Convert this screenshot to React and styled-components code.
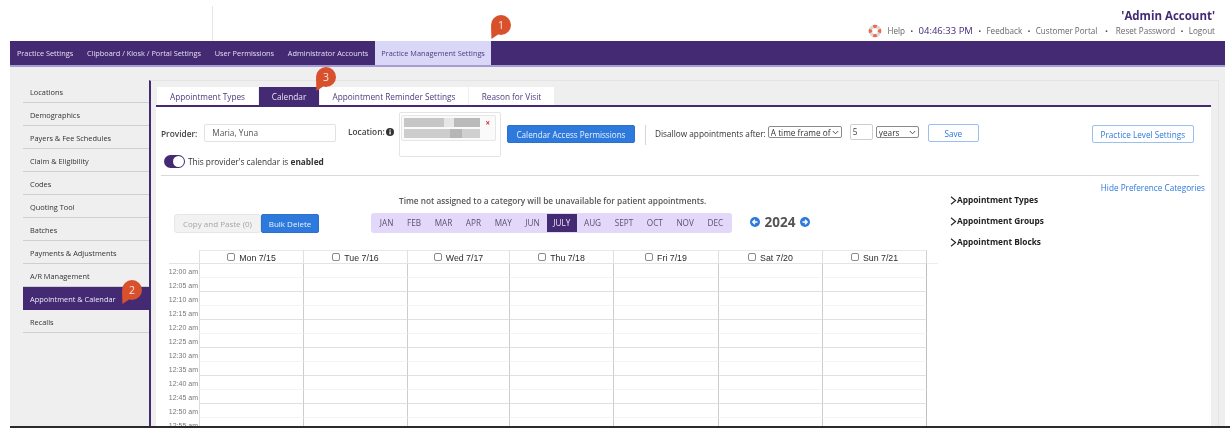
import React from "react";
import styled, { createGlobalStyle } from "styled-components";

const Global = createGlobalStyle`
  html, body { margin: 0; padding: 0; background: #fff; }
  body { font-family: "Open Sans", "Liberation Sans", sans-serif; color: #444; }
  * { box-sizing: border-box; }
`;

const PURPLE = "#432a73";
const BLUE = "#2e79dc";
const CARET = `url("data:image/svg+xml,%3Csvg xmlns='http://www.w3.org/2000/svg' width='7' height='5' viewBox='0 0 7 5'%3E%3Cpath d='M.8 1 3.5 3.8 6.2 1' fill='none' stroke='%23444' stroke-width='.9'/%3E%3C/svg%3E")`;

const Page = styled.div`
  position: relative;
  width: 1230px;
  height: 432px;
  overflow: hidden;
  background: #fff;
  filter: blur(0.4px);
`;

const Header = styled.header`
  height: 41px;
  margin-left: 10px;
  display: grid;
  grid-template-columns: 203px 1fr;
`;
const Logo = styled.div`
  margin-top: 6px;
  border-right: 1px solid #e6e6e6;
`;
const Account = styled.div`
  display: flex;
  flex-direction: column;
  align-items: flex-end;
  padding: 9px 15px 0 0;
`;
const AccountName = styled.div`
  font-size: 11.5px;
  line-height: 13px;
  font-weight: 700;
  color: ${PURPLE};
`;
const Links = styled.div`
  display: flex;
  align-items: center;
  gap: 5.25px;
  margin-top: 2px;
  font-size: 8.1px;
  line-height: 14px;
  color: #666;
`;
const Clock = styled.span`
  color: ${PURPLE};
  font-size: 9.5px;
`;
const Dot = styled.span`
  font-size: 8px;
  color: #555;
  margin: 0 ${(p) => (p.$wide ? "2.5px" : "0")};
`;

const Nav = styled.nav`
  height: 26px;
  margin: 0 5px 0 10px;
  display: flex;
  background: ${PURPLE};
  border-bottom: 2px solid #a89dd2;
`;
const NavItem = styled.div`
  padding: 0 ${(p) => (p.$active ? "6px" : "6.9px")};
  line-height: 24px;
  font-size: 7.35px;
  white-space: nowrap;
  color: ${(p) => (p.$active ? "#4d3a7e" : "#e4def2")};
  background: ${(p) => (p.$active ? "#d9d6f8" : "transparent")};
`;

const Shell = styled.div`
  height: 359px;
  margin: 0 5px 0 10px;
  padding: 13px 6px 0 13px;
  background: #efefef;
  display: grid;
  grid-template-columns: 126px 1fr;
  overflow: hidden;
`;
const Rule = styled.div`
  height: 2px;
  margin-left: 10px;
  background: #2b2b2b;
`;

const Sidebar = styled.aside`
  display: flex;
  flex-direction: column;
`;
const SideItem = styled.div`
  height: 23px;
  padding-left: 7px;
  font-size: 7.4px;
  line-height: 24px;
  white-space: nowrap;
  color: ${(p) => (p.$active ? "#efeaf8" : "#333")};
  background: ${(p) => (p.$active ? PURPLE : "transparent")};
  border-bottom: 1px solid ${(p) => (p.$active ? PURPLE : "#cfcfcf")};
`;

const Main = styled.main`
  border-left: 2px solid ${PURPLE};
  border-top: 1px solid #e4e4e4;
  border-right: 1px solid #e4e4e4;
  padding: 6px 7px 0 5px;
  min-height: 0;
`;
const Tabs = styled.div`
  display: flex;
  gap: 1px;
  height: 20px;
  border-bottom: 2px solid ${PURPLE};
  padding-left: 1px;
`;
const Tab = styled.div`
  width: ${(p) => p.$w}px;
  text-align: center;
  font-size: 8.25px;
  line-height: 19px;
  white-space: nowrap;
  color: ${(p) => (p.$active ? "#e8e2f4" : "#4d3a7e")};
  background: ${(p) => (p.$active ? PURPLE : "#fff")};
`;

const Card = styled.section`
  height: 340px;
  background: #fff;
  padding: 0 5px;
  overflow: hidden;
`;
const Settings = styled.div`
  display: flex;
  align-items: flex-start;
  height: 69px;
  border-bottom: 1px solid #d9d9d9;
  margin-right: 7px;
`;
const ProviderCol = styled.div`
  width: 187px;
  padding-top: 17px;
`;
const FieldRow = styled.div`
  display: flex;
  align-items: center;
`;
const Label = styled.label`
  font-size: 8.3px;
  font-weight: 600;
  color: #444;
  white-space: nowrap;
`;
const ProviderInput = styled.div`
  width: 132px;
  height: 18px;
  margin-left: 7px;
  padding-left: 7px;
  border: 1px solid #e2e2e2;
  border-radius: 2px;
  font-size: 8.3px;
  line-height: 16px;
  color: #555;
`;
const ToggleRow = styled.div`
  display: flex;
  align-items: center;
  gap: 3px;
  margin: 13px 0 0 3px;
  font-size: 8.3px;
  white-space: nowrap;
  color: #333;
`;
const Toggle = styled.span`
  width: 21px;
  height: 13px;
  border-radius: 7px;
  background: ${PURPLE};
  display: flex;
  justify-content: flex-end;
  align-items: center;
  padding-right: 1px;
  flex: none;
`;
const Knob = styled.span`
  width: 11px;
  height: 11px;
  border-radius: 50%;
  background: #fff;
`;
const LocationLabel = styled(Label)`
  display: flex;
  align-items: center;
  gap: 1px;
  width: 51px;
  margin-top: 19px;
`;
const LocationBox = styled.div`
  width: 102px;
  height: 45px;
  margin-top: 5px;
  padding: 2px 4px 2px 1px;
  border: 1px solid #e4e4e4;
  border-radius: 2px;
`;
const Chip = styled.div`
  position: relative;
  height: 26px;
  padding: 2px 2px;
  border: 1px solid #e6e6e6;
  border-radius: 2px;
  background: #fafafa;
  display: flex;
  flex-direction: column;
  gap: 2px;
`;
const Redacted = styled.div`
  width: 76px;
  height: 10px;
  filter: blur(0.5px);
  background: linear-gradient(90deg, ${(p) => p.$stops});
`;
const ChipClose = styled.span`
  position: absolute;
  top: 2px;
  right: 5px;
  font-size: 8px;
  line-height: 9px;
  font-weight: 700;
  color: #c8343f;
`;
const AccessButton = styled.button`
  width: 128px;
  height: 18px;
  margin: 18px 0 0 6px;
  padding: 0;
  border: 1px solid #2a70cf;
  border-radius: 2px;
  background: ${BLUE};
  color: #eaf2fd;
  font: 8.1px "Open Sans", sans-serif;
`;
const Divider = styled.div`
  width: 1px;
  height: 20px;
  margin: 18px 9px 0 10px;
  background: #d4d4d4;
`;
const Disallow = styled.div`
  display: flex;
  align-items: center;
  height: 18px;
  margin-top: 17px;
  font-size: 8.25px;
  color: #333;
  white-space: nowrap;
`;
const NativeSelect = styled.select`
  appearance: none;
  width: ${(p) => p.$w}px;
  height: 12px;
  margin: 0 0 2px ${(p) => p.$ml}px;
  padding: 0 8px 0 2px;
  border: 1px solid #8a8a8a;
  border-radius: 2px;
  background: #fff ${CARET} no-repeat right 2px center;
  font: 8.25px "Open Sans", sans-serif;
  color: #333;
`;
const NumberBox = styled.div`
  width: 23px;
  height: 16px;
  margin: 0 0 2px 8px;
  padding-left: 2px;
  border: 1px solid #cfcfcf;
  border-radius: 2px;
  font-size: 8.3px;
  line-height: 14px;
  color: #444;
`;
const OutlineButton = styled.button`
  flex: none;
  align-self: flex-start;
  width: ${(p) => p.$w}px;
  height: 18px;
  margin: ${(p) => p.$m};
  padding: 0;
  border: 1px solid #9ac0ee;
  border-radius: 2px;
  background: #fff;
  color: ${BLUE};
  font: 8.2px "Open Sans", sans-serif;
  white-space: nowrap;
`;

const Lower = styled.div`
  display: grid;
  grid-template-columns: 790px 1fr;
`;
const Scheduler = styled.div`
  padding-top: 19px;
`;
const Notice = styled.div`
  padding-left: 238px;
  font-size: 8.25px;
  line-height: 12px;
  font-weight: 600;
  color: #555;
  white-space: nowrap;
`;
const Controls = styled.div`
  display: flex;
  align-items: flex-start;
  margin-top: 6px;
  padding-left: 13px;
`;
const CopyButton = styled.button`
  width: 87px;
  height: 19px;
  margin-top: 1px;
  padding: 0;
  border: 1px solid #e6e6e6;
  border-radius: 3px;
  background: #f2f2f2;
  color: #a5a5a5;
  font: 8px "Open Sans", sans-serif;
`;
const DeleteButton = styled.button`
  width: 58px;
  height: 19px;
  margin: 1px 52px 0 0;
  padding: 0;
  border: 1px solid #2a70cf;
  border-radius: 2px;
  background: ${BLUE};
  color: #eaf2fd;
  font: 8px "Open Sans", sans-serif;
`;
const Months = styled.div`
  width: 361px;
  height: 20px;
  padding: 1px 2px;
  border-radius: 3px;
  background: #e3d8fa;
  display: flex;
  justify-content: space-between;
  align-items: stretch;
`;
const Month = styled.div`
  flex: 1 1 auto;
  text-align: center;
  padding: 0 2px;
  font-size: 8.2px;
  line-height: 18px;
  color: ${(p) => (p.$active ? "#ece6f8" : "#5a5270")};
  background: ${(p) => (p.$active ? PURPLE : "transparent")};
`;
const YearPicker = styled.div`
  display: flex;
  align-items: center;
  gap: 4.5px;
  height: 18px;
  margin-left: 18px;
`;
const Year = styled.span`
  font-size: 13.5px;
  line-height: 18px;
  font-weight: 700;
  color: #555;
`;

const Grid = styled.div`
  display: grid;
  grid-template-columns: 38px 104px 104px 102px 104px 105px 104px 105px 11px;
  grid-auto-rows: 14px;
  margin-top: 17px;
  width: 780px;
  font-family: "Liberation Sans", Arial, sans-serif;
`;
const Corner = styled.div`
  height: 14px;
  border-bottom: 1px solid #e4e4e4;
  margin-left: 8px;
`;
const HeadTail = styled.div`
  height: 14px;
  border-bottom: 1px solid #ececec;
`;
const DayHead = styled.div`
  height: 14px;
  display: flex;
  justify-content: center;
  align-items: center;
  gap: 4px;
  padding-top: 2px;
  border-top: 1px solid #e8e8e8;
  border-left: 1px solid #e0e0e0;
  border-bottom: 1px solid #e4e4e4;
  border-right: ${(p) => (p.$last ? "1px solid #cfcfcf" : "none")};
  font-size: 8.8px;
  color: #2b2b2b;
`;
const Check = styled.input`
  appearance: none;
  width: 8px;
  height: 8px;
  margin: 0 0 2px;
  border: 1px solid #8a8a8a;
  border-radius: 2px;
  background: #fff;
`;
const TimeCell = styled.div`
  padding-right: 1px;
  text-align: right;
  font-size: 7px;
  line-height: 15px;
  white-space: nowrap;
  color: #777;
`;
const SlotCell = styled.div`
  border-left: 1px solid ${(p) => (p.$tone ? "#cdcdcd" : "#dcdcdc")};
  border-right: ${(p) => (p.$last ? "1px solid #bdbdbd" : "none")};
  border-bottom: 1px solid ${(p) => (p.$odd ? "#e0e0e0" : "#f4f4f4")};
`;
const RowGap = styled.div``;

const Categories = styled.aside`
  display: flex;
  flex-direction: column;
  padding-top: 6px;
`;
const HideLink = styled.div`
  align-self: flex-end;
  margin-right: 1px;
  font-size: 8.2px;
  line-height: 11px;
  color: ${BLUE};
  white-space: nowrap;
`;
const CategoryList = styled.div`
  display: flex;
  flex-direction: column;
  gap: 9px;
  margin: 0 0 0 -1px;
  padding-top: 1px;
`;
const Category = styled.div`
  display: flex;
  align-items: center;
  font-size: 8.3px;
  line-height: 12px;
  font-weight: 700;
  color: #222;
  white-space: nowrap;
`;

const Badge = styled.div`
  position: absolute;
  left: ${(p) => p.$x}px;
  top: ${(p) => p.$y}px;
  width: 20px;
  height: 20px;
  border-radius: 50%;
  background: #d8512c;
  color: #fbe9e0;
  font-size: 10.5px;
  line-height: 20px;
  text-align: center;
  &::after {
    content: "";
    position: absolute;
    left: 0;
    top: 11px;
    width: 9px;
    height: 13px;
    background: #d8512c;
    clip-path: polygon(0 0, 100% 55%, 5% 100%);
  }
`;

const LifeRing = () => (
  <svg width="14" height="14" viewBox="0 0 14 14">
    <circle cx="7" cy="7" r="4.6" fill="none" stroke="#d9d9d9" strokeWidth="3.4" />
    <circle
      cx="7"
      cy="7"
      r="4.6"
      fill="none"
      stroke="#ee6a4b"
      strokeWidth="3.4"
      pathLength="40"
      strokeDasharray="5 5"
      strokeDashoffset="2.5"
    />
  </svg>
);
const InfoIcon = () => (
  <svg width="8" height="8" viewBox="0 0 8 8">
    <circle cx="4" cy="4" r="4" fill="#333" />
    <rect x="3.4" y="3.4" width="1.3" height="3" fill="#fff" />
    <rect x="3.4" y="1.5" width="1.3" height="1.2" fill="#fff" />
  </svg>
);
const YearArrow = ({ flip }) => (
  <svg width="10" height="10" viewBox="0 0 10 10" style={flip ? { transform: "scaleX(-1)" } : undefined}>
    <circle cx="5" cy="5" r="5" fill="#2e79dc" />
    <path d="M2.5 5H7M5 2.8 7.2 5 5 7.2" fill="none" stroke="#fff" strokeWidth="1.4" />
  </svg>
);
const Caret = () => (
  <svg width="7" height="9" viewBox="0 0 7 9">
    <path d="M1 .8 5.6 4.5 1 8.2" fill="none" stroke="#222" strokeWidth="1.1" />
  </svg>
);

const topNav = [
  "Practice Settings",
  "Clipboard / Kiosk / Portal Settings",
  "User Permissions",
  "Administrator Accounts",
];
const sideNav = [
  "Locations",
  "Demographics",
  "Payers & Fee Schedules",
  "Claim & Eligibility",
  "Codes",
  "Quoting Tool",
  "Batches",
  "Payments & Adjustments",
  "A/R Management",
  "Appointment & Calendar",
  "Recalls",
];
const tabs = [
  ["Appointment Types", 101],
  ["Calendar", 60],
  ["Appointment Reminder Settings", 148],
  ["Reason for Visit", 85],
];
const months = ["JAN", "FEB", "MAR", "APR", "MAY", "JUN", "JULY", "AUG", "SEPT", "OCT", "NOV", "DEC"];
const days = ["Mon 7/15", "Tue 7/16", "Wed 7/17", "Thu 7/18", "Fri 7/19", "Sat 7/20", "Sun 7/21"];
const times = ["00", "05", "10", "15", "20", "25", "30", "35", "40", "45", "50", "55"];

export default function App() {
  return (
    <Page>
      <Global />
      <Header>
        <Logo />
        <Account>
          <AccountName>'Admin Account'</AccountName>
          <Links>
            <LifeRing />
            <span>Help</span>
            <Dot>•</Dot>
            <Clock>04:46:33 PM</Clock>
            <Dot>•</Dot>
            <span>Feedback</span>
            <Dot>•</Dot>
            <span>Customer Portal</span>
            <Dot $wide>•</Dot>
            <span>Reset Password</span>
            <Dot>•</Dot>
            <span>Logout</span>
          </Links>
        </Account>
      </Header>
      <Nav>
        {topNav.map((t) => (
          <NavItem key={t}>{t}</NavItem>
        ))}
        <NavItem $active>Practice Management Settings</NavItem>
      </Nav>
      <Shell>
        <Sidebar>
          {sideNav.map((s) => (
            <SideItem key={s} $active={s === "Appointment & Calendar"}>
              {s}
            </SideItem>
          ))}
        </Sidebar>
        <Main>
          <Tabs>
            {tabs.map(([t, w]) => (
              <Tab key={t} $w={w} $active={t === "Calendar"}>
                {t}
              </Tab>
            ))}
          </Tabs>
          <Card>
            <Settings>
              <ProviderCol>
                <FieldRow>
                  <Label>Provider:</Label>
                  <ProviderInput>Maria, Yuna</ProviderInput>
                </FieldRow>
                <ToggleRow>
                  <Toggle>
                    <Knob />
                  </Toggle>
                  <span>
                    This provider's calendar is <b>enabled</b>
                  </span>
                </ToggleRow>
              </ProviderCol>
              <LocationLabel>
                Location:
                <InfoIcon />
              </LocationLabel>
              <LocationBox>
                <Chip>
                  <Redacted $stops="#c6c6c6 0 52%, #e6e6e6 52% 66%, #bababa 66% 100%" />
                  <Redacted $stops="#cdcdcd 0 60%, #b6b6b6 60% 76%, #cfcfcf 76% 100%" />
                  <ChipClose>×</ChipClose>
                </Chip>
              </LocationBox>
              <AccessButton>Calendar Access Permissions</AccessButton>
              <Divider />
              <Disallow>
                Disallow appointments after:
                <NativeSelect $w={74} $ml={2} defaultValue="a">
                  <option value="a">A time frame of</option>
                </NativeSelect>
                <NumberBox>5</NumberBox>
                <NativeSelect $w={43} $ml={3} defaultValue="y">
                  <option value="y">years</option>
                </NativeSelect>
                <OutlineButton $w={51} $m="0 0 0 9px">
                  Save
                </OutlineButton>
                <OutlineButton $w={102} $m="1px 0 -1px 113px">
                  Practice Level Settings
                </OutlineButton>
              </Disallow>
            </Settings>
            <Lower>
              <Scheduler>
                <Notice>Time not assigned to a category will be unavailable for patient appointments.</Notice>
                <Controls>
                  <CopyButton>Copy and Paste (0)</CopyButton>
                  <DeleteButton>Bulk Delete</DeleteButton>
                  <Months>
                    {months.map((m) => (
                      <Month key={m} $active={m === "JULY"}>
                        {m}
                      </Month>
                    ))}
                  </Months>
                  <YearPicker>
                    <YearArrow flip />
                    <Year>2024</Year>
                    <YearArrow />
                  </YearPicker>
                </Controls>
                <Grid>
                  <Corner />
                  {days.map((d, i) => (
                    <DayHead key={d} $last={i === 6}>
                      <Check type="checkbox" readOnly />
                      {d}
                    </DayHead>
                  ))}
                  <HeadTail />
                  {times.map((t, r) => (
                    <React.Fragment key={t}>
                      <TimeCell>12:{t} am</TimeCell>
                      {days.map((d, i) => (
                        <SlotCell key={d} $odd={r % 2 === 1} $tone={i > 0} $last={i === 6} />
                      ))}
                      <RowGap />
                    </React.Fragment>
                  ))}
                </Grid>
              </Scheduler>
              <Categories>
                <HideLink>Hide Preference Categories</HideLink>
                <CategoryList>
                  {["Appointment Types", "Appointment Groups", "Appointment Blocks"].map((c) => (
                    <Category key={c}>
                      <Caret />
                      {c}
                    </Category>
                  ))}
                </CategoryList>
              </Categories>
            </Lower>
          </Card>
        </Main>
      </Shell>
      <Rule />
      <Badge $x={491} $y={15}>1</Badge>
      <Badge $x={122} $y={280}>2</Badge>
      <Badge $x={316} $y={67}>3</Badge>
    </Page>
  );
}
